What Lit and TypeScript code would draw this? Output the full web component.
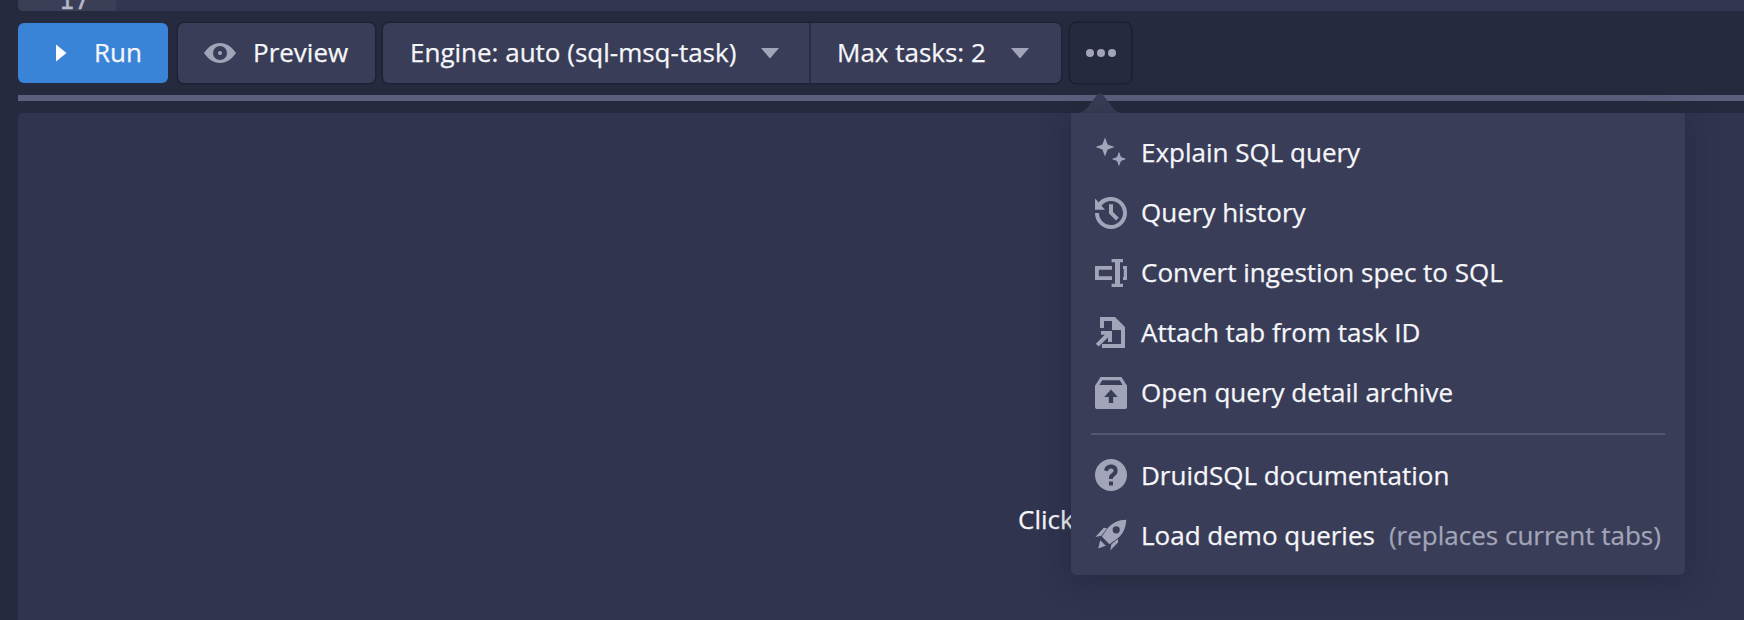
import { LitElement, html, css, svg } from "lit";
import { customElement } from "lit/decorators.js";

const icons: Record<string, unknown> = {
  sparkles: svg`<path d="M5 0.2 L6.3 3.7 L9.8 5 L6.3 6.3 L5 9.8 L3.7 6.3 L0.2 5 L3.7 3.7 Z"/><path d="M12 7.4 L13 10 L15.6 11 L13 12 L12 14.6 L11 12 L8.4 11 L11 10 Z"/>`,
  history: svg`<path fill-rule="evenodd" d="M8 0a8 8 0 1 1-8 8h2a6 6 0 1 0 1.200-3.600L5 6.400H0V.8l1.800 1.800A8 8 0 0 1 8 0z"/><path d="M7 3.600h2v3.900l2.900 2.900-1.400 1.400L7 8.300z"/>`,
  text: svg`<path fill-rule="evenodd" d="M0 4.500h8.500v1.900H1.900v3.200h6.600v1.900H0z"/><path d="M8.300 1h5.700v1.600h-1.500v10.800H14V15H8.300v-1.600h1.700V2.600H8.300z"/><path d="M14 4.500h2v7h-2V10h.4V6H14z"/>`,
  attach: svg`<path d="M2.500 0h7.500l5 5v10.500H3.500v-2h9.500V6.500H8.500V2h-4v3.500h-2z"/><path d="M3 7h5.500v5.500h-2v-2.200L1.800 14.800.4 13.400l4.500-4.500H3z"/>`,
  box: svg`<path fill-rule="evenodd" d="M2.800 0h10.400L16 4.400V15a1 1 0 0 1-1 1H1a1 1 0 0 1-1-1V4.400zM3.600 1.600 2.200 4h11.600l-1.400-2.400zM8 6.200 4.600 10h2.300v3h2.200v-3h2.300z"/>`,
  help: svg`<path fill-rule="evenodd" d="M8 0a8 8 0 1 1 0 16A8 8 0 0 1 8 0zM7 11.200v2h2v-2zM8 2.800c-1.900 0-3.200 1.100-3.400 3l1.900.3c.1-.9.6-1.400 1.500-1.400.8 0 1.300.4 1.300 1.100 0 .6-.4 1-1.100 1.500-.9.7-1.200 1.200-1.200 2.200v.5h2v-.3c0-.5.2-.7.9-1.200.9-.7 1.400-1.400 1.400-2.600 0-1.900-1.100-3.100-3.300-3.100z"/>`,
  rocket: svg`<path fill-rule="evenodd" d="M15.600.4c-.1 3.900-1.400 7-4.400 9.400l-4 2.800L3.400 8.800l2.800-4C8.600 1.800 11.700.5 15.600.4zM10.600 3.600a1.800 1.800 0 1 0 0 3.600 1.800 1.800 0 0 0 0-3.600z"/><path d="M4.400 4.400 6 4.600 3.200 8.400.2 9z"/><path d="M11.400 10l.2 1.600L7.600 15.800l.6-3.200z"/><path d="M2.600 10.600l2.800 2.800-3.800 1.400z"/>`,
};

const items = [
  ["sparkles", "Explain SQL query"],
  ["history", "Query history"],
  ["text", "Convert ingestion spec to SQL"],
  ["attach", "Attach tab from task ID"],
  ["box", "Open query detail archive"],
];

@customElement("app-root")
export class AppRoot extends LitElement {
  static styles = css`
    :host {
      display: block;
      position: relative;
      width: 1744px;
      height: 620px;
      overflow: hidden;
      background: #262a3e;
      font-family: "Open Sans", sans-serif;
      font-size: 26px;
      color: #f5f6fa;
      -webkit-text-stroke: 0.25px currentColor;
    }
    .editor {
      height: 11px;
      margin-left: 18px;
      background: #323651;
      overflow: hidden;
      border-radius: 0 0 0 5px;
    }
    .gutter {
      width: 98px;
      height: 11px;
      background: #3b3e57;
      color: #b6b8c8;
      font-family: "DejaVu Sans Mono", monospace;
      font-size: 26px;
      line-height: 26px;
      display: flex;
      justify-content: flex-end;
      padding-right: 26px;
      box-sizing: border-box;
    }
    .gutter span {
      margin-top: -13px;
    }
    .toolbar {
      display: flex;
      height: 60px;
      margin: 12px 0 12px 18px;
      align-items: stretch;
    }
    .btn {
      display: flex;
      align-items: center;
      gap: 17px;
      padding: 0 26px;
      box-sizing: border-box;
      background: #3a3d57;
      border-radius: 6px;
      white-space: nowrap;
      box-shadow: 0 0 0 1.5px #1f2235;
    }
    .btn span {
      padding-bottom: 2px;
    }
    .btn svg.ic {
      width: 32px;
      height: 32px;
      fill: #a2a5b9;
      flex: none;
    }
    .run {
      background: #3a84d8;
      box-shadow: none;
      width: 150px;
      padding-left: 27px;
    }
    .run svg.ic {
      fill: #fff;
    }
    .preview {
      margin-left: 10px;
      width: 197px;
    }
    .group {
      display: flex;
      margin-left: 8px;
      border-radius: 6px;
      box-shadow: 0 0 0 1.5px #1f2235;
    }
    .group .btn {
      box-shadow: none;
      border-radius: 0;
      gap: 18px;
    }
    .group .btn:first-child {
      border-radius: 6px 0 0 6px;
      width: 428px;
      border-right: 2px solid #2a2d43;
      padding-left: 27px;
    }
    .group .btn:last-child {
      border-radius: 0 6px 6px 0;
      width: 250px;
      padding-left: 26px;
    }
    .more {
      margin-left: 9px;
      width: 61px;
      padding: 0;
      justify-content: center;
      background: #262a3e;
      box-shadow: 0 0 0 1.5px #1c1f31;
    }
    .split {
      height: 6px;
      margin-left: 18px;
      background: #5c607f;
    }
    .panel {
      margin: 12px 0 0 18px;
      height: 507px;
      background: #30344f;
      border-radius: 5px 0 0 0;
      box-sizing: border-box;
      padding: 388px 0 0 1000px;
      line-height: 36px;
      white-space: nowrap;
    }
    .arrow {
      position: absolute;
      left: 1072px;
      top: 92px;
      width: 56px;
      height: 22px;
      fill: #3a3d57;
    }
    .menu {
      position: absolute;
      left: 1071px;
      top: 113px;
      width: 614px;
      height: 462px;
      box-sizing: border-box;
      padding: 10px 20px;
      background: #3a3d57;
      border-radius: 0 0 6px 6px;
      box-shadow: 0 4px 30px rgba(20, 22, 38, 0.35);
    }
    .item {
      display: flex;
      align-items: center;
      height: 60px;
      gap: 14px;
      padding-left: 4px;
      white-space: nowrap;
    }
    .item.upper span {
      padding-bottom: 2px;
    }
    .item svg {
      width: 32px;
      height: 32px;
      fill: #a2a5b9;
      flex: none;
    }
    .label {
      color: #a2a5b9;
    }
    .divider {
      height: 2px;
      margin: 10px 0;
      background: #54576f;
    }
  `;

  private row(icon: string, text: string, label?: string, upper = false) {
    return html`<div class="item ${upper ? "upper" : ""}">
      <svg viewBox="0 0 16 16">${icons[icon]}</svg><span>${text}</span>
      ${label ? html`<span class="label">${label}</span>` : ""}
    </div>`;
  }

  render() {
    const caret = html`<svg class="ic" viewBox="0 0 32 32"><path d="M7 11h18l-9 10.500z" /></svg>`;
    return html`
      <div class="editor"><div class="gutter"><span>17</span></div></div>
      <div class="toolbar">
        <div class="btn run">
          <svg class="ic" viewBox="0 0 32 32"><path d="M11 7.500l10.500 8.500-10.500 8.500z" /></svg><span>Run</span>
        </div>
        <div class="btn preview">
          <svg class="ic" viewBox="0 0 16 16">
            <path
              fill-rule="evenodd"
              d="M8 3c3.400 0 6 2.100 8 5-2 2.900-4.600 5-8 5s-6-2.100-8-5c2-2.900 4.600-5 8-5zm0 1.500a3.500 3.500 0 1 0 0 7 3.500 3.500 0 0 0 0-7zm0 2.500a1 1 0 1 1 0 2 1 1 0 0 1 0-2z"
            />
          </svg>
          <span>Preview</span>
        </div>
        <div class="group">
          <div class="btn"><span>Engine: auto (sql-msq-task)</span>${caret}</div>
          <div class="btn"><span>Max tasks: 2</span>${caret}</div>
        </div>
        <div class="btn more">
          <svg class="ic" viewBox="0 0 32 32">
            <circle cx="5" cy="16" r="4" /><circle cx="16" cy="16" r="4" /><circle cx="27" cy="16" r="4" />
          </svg>
        </div>
      </div>
      <div class="split"></div>
      <div class="panel">Click Run to execute your query</div>
      <svg class="arrow" viewBox="0 0 56 22"><path d="M0 22c10 0 14-4 18-10l7-9c1.800-2 4.200-2 6 0l7 9c4 6 8 10 18 10z" /></svg>
      <div class="menu">
        ${items.map(([i, t]) => this.row(i, t, undefined, true))}
        <div class="divider"></div>
        ${this.row("help", "DruidSQL documentation")}
        ${this.row("rocket", "Load demo queries", "(replaces current tabs)")}
      </div>
    `;
  }
}
